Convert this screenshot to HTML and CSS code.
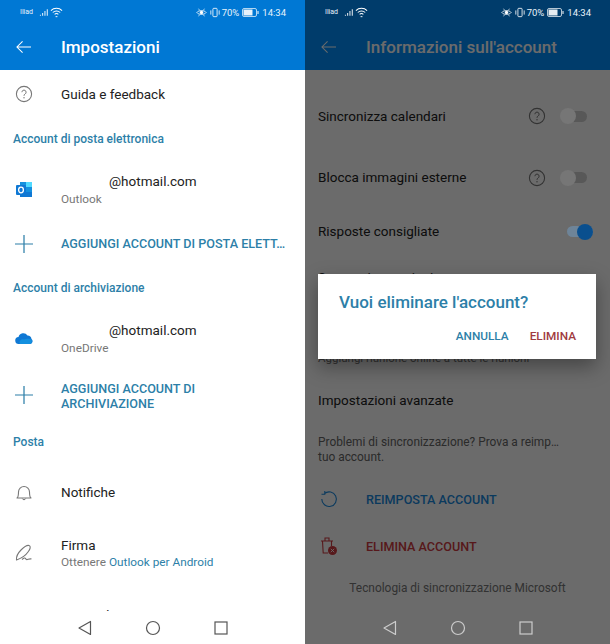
FILE: index.html
```html
<!DOCTYPE html>
<html lang="it">
<head>
<meta charset="utf-8">
<title>Impostazioni</title>
<link rel="stylesheet" href="styles.css">
</head>
<body>
<main class="screens">

  <section class="phone">
    <header class="appbar">
      <div class="status">
        <div class="status-left">
          <span class="carrier">Iliad</span>
          <svg class="ic-signal" viewBox="0 0 12 8"><path d="M1 7h1v1H1zM3.500 5h1v3h-1zM6 3h1v5H6zM8.500 1h1v7h-1z" fill="#fff"/></svg>
          <svg class="ic-wifi" viewBox="0 0 14 11"><path d="M1 3.500a8.500 8.500 0 0 1 12 0M3 5.500a5.700 5.700 0 0 1 8 0M5 7.500a2.800 2.800 0 0 1 4 0" fill="none" stroke="#fff" stroke-width="1.100"/><path d="M6 9.500h2v1H6z" fill="#fff"/></svg>
        </div>
        <div class="status-right">
          <svg class="ic-eye" viewBox="0 0 13 11"><path d="M1 5.500C3 2.500 10 2.500 12 5.500 10 8.500 3 8.500 1 5.500z" fill="none" stroke="#fff"/><circle cx="6.500" cy="5.500" r="2" fill="#fff"/><path d="M3 1l1 1.500M10 1L9 2.500M3 10l1-1.500M10 10L9 8.500" stroke="#fff" stroke-width=".8"/></svg>
          <svg class="ic-vib" viewBox="0 0 12 11"><rect x="3.500" y=".5" width="5" height="10" rx="1" fill="none" stroke="#fff"/><path d="M1 3v5M11 3v5" stroke="#fff"/></svg>
          <span>70%</span>
          <svg class="ic-batt" viewBox="0 0 17 9"><rect x=".5" y=".5" width="14" height="8" rx="1.500" fill="none" stroke="#fff" stroke-opacity=".7"/><rect x="1.500" y="1.500" width="9" height="6" fill="#fff" fill-opacity=".9"/><rect x="15.500" y="3" width="1" height="3" fill="#fff"/></svg>
          <span>14:34</span>
        </div>
      </div>
      <div class="toolbar">
        <svg class="ic-back" viewBox="0 0 16 14"><path d="M16 7H1M7 1L1 7l6 6" fill="none" stroke="#fff" stroke-width="1.100"/></svg>
        <h1 class="title">Impostazioni</h1>
      </div>
    </header>

    <div class="list">
      <div class="row row-help">
        <svg class="icon" viewBox="0 0 18 18"><circle cx="9" cy="9" r="7.600" fill="none" stroke="#777" stroke-width="1.100"/><path d="M6.900 7.200a2.100 2.100 0 1 1 3.200 1.800c-.8.500-1.100.8-1.100 1.800" fill="none" stroke="#777"/><circle cx="9" cy="12.800" r=".7" fill="#777"/></svg>
        <span class="label">Guida e feedback</span>
      </div>
      <h2 class="section">Account di posta elettronica</h2>
      <div class="row row-account">
        <svg class="icon" viewBox="0 0 18 18"><rect x="5" y="1" width="12" height="15" fill="#28a8ea"/><rect x="5" y="1" width="6" height="5" fill="#1490df"/><rect x="11" y="1" width="6" height="5" fill="#50d9ff"/><rect x="11" y="6" width="6" height="5" fill="#1490df"/><rect x="5" y="11" width="12" height="5" fill="#0f78d4"/><rect x="1" y="4" width="10" height="10" rx="1" fill="#0f78d4"/><ellipse cx="6" cy="9" rx="2.400" ry="2.800" fill="none" stroke="#fff" stroke-width="1.300"/></svg>
        <div class="text">
          <span class="email">@hotmail.com</span>
          <span class="sub">Outlook</span>
        </div>
      </div>
      <div class="row row-add">
        <svg class="icon" viewBox="0 0 16 16"><path d="M8 0v16M0 8h16" stroke="#2d7fa8" stroke-width="1.100"/></svg>
        <span class="action">AGGIUNGI ACCOUNT DI POSTA ELETT…</span>
      </div>
      <h2 class="section">Account di archiviazione</h2>
      <div class="row row-account2">
        <svg class="icon" viewBox="0 0 18 18"><path d="M4 14a3.500 3.500 0 0 1-.5-7 5 5 0 0 1 9-1.500 4 4 0 0 1 4 3.500A2.800 2.800 0 0 1 15 14z" fill="#0f78d4"/><path d="M5 14c-1.500-2.500 1-5.500 4-4.500 1.500-.5 5-1.500 7.500 0 1 1.500 0 4.500-1.500 4.500z" fill="#1490df"/></svg>
        <div class="text">
          <span class="email">@hotmail.com</span>
          <span class="sub">OneDrive</span>
        </div>
      </div>
      <div class="row row-add2">
        <svg class="icon" viewBox="0 0 16 16"><path d="M8 0v16M0 8h16" stroke="#2d7fa8" stroke-width="1.100"/></svg>
        <span class="action action-wrap">AGGIUNGI ACCOUNT DI ARCHIVIAZIONE</span>
      </div>
      <h2 class="section">Posta</h2>
      <div class="row row-notify">
        <svg class="icon" viewBox="0 0 18 18"><path d="M2 14c1.500-1 1.500-2.500 1.500-6a5.500 5.500 0 0 1 11 0c0 3.500 0 5 1.500 6z" fill="none" stroke="#777" stroke-width="1.100" stroke-linejoin="round"/><path d="M7.300 14.500a1.800 1.800 0 0 0 3.400 0" fill="none" stroke="#777"/></svg>
        <span class="label">Notifiche</span>
      </div>
      <div class="row row-sign">
        <svg class="icon" viewBox="0 0 18 18"><path d="M1.500 16C1 12 3 9 6 6c3-3 6-5 8-4.500s1.500 3.500-1 6.500c-2 3-6 6-11.500 8zM7 15.500c2-1.500 3-2 3.500-1s.5 1.500 2 1 2.500-1 4-.5" fill="none" stroke="#777" stroke-width="1.100" stroke-linejoin="round"/></svg>
        <div class="text">
          <span class="label">Firma</span>
          <span class="sub">Ottenere <span class="link">Outlook per Android</span></span>
        </div>
      </div>
      <div class="row row-cut">
        <span class="icon"></span>
        <span class="label">Azioni di scorrimento</span>
      </div>
    </div>

    <nav class="navbar">
      <svg class="nav-ic" viewBox="0 0 16 16"><path d="M13.500 1.500v13L2 8z" fill="none" stroke="#555" stroke-width="1.200" stroke-linejoin="round"/></svg>
      <svg class="nav-ic" viewBox="0 0 16 16"><circle cx="8" cy="8" r="6.500" fill="none" stroke="#555" stroke-width="1.200"/></svg>
      <svg class="nav-ic" viewBox="0 0 16 16"><rect x="2" y="2" width="12" height="12" fill="none" stroke="#555" stroke-width="1.200"/></svg>
    </nav>
  </section>

  <section class="phone phone-dim">
    <header class="appbar">
      <div class="status status-top">
        <div class="status-left">
          <span class="carrier">Iliad</span>
          <svg class="ic-signal" viewBox="0 0 12 8"><path d="M1 7h1v1H1zM3.500 5h1v3h-1zM6 3h1v5H6zM8.500 1h1v7h-1z" fill="#fff"/></svg>
          <svg class="ic-wifi" viewBox="0 0 14 11"><path d="M1 3.500a8.500 8.500 0 0 1 12 0M3 5.500a5.700 5.700 0 0 1 8 0M5 7.500a2.800 2.800 0 0 1 4 0" fill="none" stroke="#fff" stroke-width="1.100"/><path d="M6 9.500h2v1H6z" fill="#fff"/></svg>
        </div>
        <div class="status-right">
          <svg class="ic-eye" viewBox="0 0 13 11"><path d="M1 5.500C3 2.500 10 2.500 12 5.500 10 8.500 3 8.500 1 5.500z" fill="none" stroke="#fff"/><circle cx="6.500" cy="5.500" r="2" fill="#fff"/><path d="M3 1l1 1.500M10 1L9 2.500M3 10l1-1.500M10 10L9 8.500" stroke="#fff" stroke-width=".8"/></svg>
          <svg class="ic-vib" viewBox="0 0 12 11"><rect x="3.500" y=".5" width="5" height="10" rx="1" fill="none" stroke="#fff"/><path d="M1 3v5M11 3v5" stroke="#fff"/></svg>
          <span>70%</span>
          <svg class="ic-batt" viewBox="0 0 17 9"><rect x=".5" y=".5" width="14" height="8" rx="1.500" fill="none" stroke="#fff" stroke-opacity=".7"/><rect x="1.500" y="1.500" width="9" height="6" fill="#fff" fill-opacity=".9"/><rect x="15.500" y="3" width="1" height="3" fill="#fff"/></svg>
          <span>14:34</span>
        </div>
      </div>
      <div class="toolbar">
        <svg class="ic-back" viewBox="0 0 16 14"><path d="M16 7H1M7 1L1 7l6 6" fill="none" stroke="#fff" stroke-width="1.100"/></svg>
        <h1 class="title">Informazioni sull'account</h1>
      </div>
    </header>

    <div class="list list-info">
      <div class="opt opt-cal">
        <span class="label">Sincronizza calendari</span>
        <svg class="opt-help" viewBox="0 0 18 18"><circle cx="9" cy="9" r="7.600" fill="none" stroke="#777" stroke-width="1.100"/><path d="M6.900 7.200a2.100 2.100 0 1 1 3.200 1.800c-.8.500-1.100.8-1.100 1.800" fill="none" stroke="#777"/><circle cx="9" cy="12.800" r=".7" fill="#777"/></svg>
        <span class="toggle"><span class="knob"></span></span>
      </div>
      <div class="opt opt-img">
        <span class="label">Blocca immagini esterne</span>
        <svg class="opt-help" viewBox="0 0 18 18"><circle cx="9" cy="9" r="7.600" fill="none" stroke="#777" stroke-width="1.100"/><path d="M6.900 7.200a2.100 2.100 0 1 1 3.200 1.800c-.8.500-1.100.8-1.100 1.800" fill="none" stroke="#777"/><circle cx="9" cy="12.800" r=".7" fill="#777"/></svg>
        <span class="toggle"><span class="knob"></span></span>
      </div>
      <div class="opt opt-reply">
        <span class="label">Risposte consigliate</span>
        <span class="toggle toggle-on"><span class="knob"></span></span>
      </div>
      <div class="opt opt-meet">
        <span class="label">Sempre in una riunione</span>
      </div>
      <div class="opt opt-online">
        <span class="hint">Aggiungi riunione online a tutte le riunioni</span>
      </div>
      <div class="opt opt-adv">
        <span class="label">Impostazioni avanzate</span>
      </div>
      <p class="trouble">Problemi di sincronizzazione? Prova a reimp…<br>tuo account.</p>
      <div class="cmd cmd-reset">
        <svg class="icon" viewBox="0 0 18 18"><path d="M4.500 3.500A7.300 7.300 0 1 1 1.800 9M4.800 1v3.300H1.500" fill="none" stroke="#1a8ae0" stroke-width="1.100"/></svg>
        <span class="action cmd-blue">REIMPOSTA ACCOUNT</span>
      </div>
      <div class="cmd cmd-del">
        <svg class="icon icon-bin" viewBox="0 0 18 20"><path d="M1 5h12M5 5V2h4v3M2.500 5l.7 12h5" fill="none" stroke="#d03a40" stroke-width="1.100"/><path d="M11.500 5v5" stroke="#d03a40" stroke-width="1.100"/><circle cx="12.500" cy="14.500" r="4.500" fill="#d03a40"/><path d="M10.800 12.800l3.400 3.400M14.200 12.800l-3.400 3.400" stroke="#fff" stroke-width=".9"/></svg>
        <span class="action cmd-red">ELIMINA ACCOUNT</span>
      </div>
      <p class="powered">Tecnologia di sincronizzazione Microsoft</p>
    </div>

    <div class="scrim"></div>

    <nav class="navbar navbar-dim">
      <svg class="nav-ic" viewBox="0 0 16 16"><path d="M13.500 1.500v13L2 8z" fill="none" stroke="#ccc" stroke-width="1.200" stroke-linejoin="round"/></svg>
      <svg class="nav-ic" viewBox="0 0 16 16"><circle cx="8" cy="8" r="6.500" fill="none" stroke="#ccc" stroke-width="1.200"/></svg>
      <svg class="nav-ic" viewBox="0 0 16 16"><rect x="2" y="2" width="12" height="12" fill="none" stroke="#ccc" stroke-width="1.200"/></svg>
    </nav>

    <div class="dialog">
      <h2 class="dialog-title">Vuoi eliminare l'account?</h2>
      <div class="dialog-actions">
        <span class="btn btn-cancel">ANNULLA</span>
        <span class="btn btn-delete">ELIMINA</span>
      </div>
    </div>
  </section>

</main>
</body>
</html>
```

FILE: styles.css
```css
* { box-sizing: border-box; }

html, body {
  margin: 0;
  padding: 0;
  width: 610px;
  height: 644px;
  overflow: hidden;
  background: #fff;
  font-family: Roboto, "Liberation Sans", sans-serif;
}

.screens { display: flex; width: 610px; height: 644px; }

.phone {
  position: relative;
  width: 305px;
  height: 644px;
  overflow: hidden;
  display: flex;
  flex-direction: column;
  background: #fff;
}

/* header */
.appbar { height: 70px; flex: none; background: #0078d4; color: #fff; }
.phone-dim .appbar { background: #0090ff; }

.status {
  height: 24px;
  padding: 0 19px 0 20px;
  display: flex;
  justify-content: space-between;
  align-items: center;
  font-size: 9.500px;
  color: #e8f3fb;
}
.status-top { position: relative; z-index: 2; }
.status-left, .status-right { display: flex; align-items: center; }
.status-right { gap: 3px; font-size: 9.500px; }
.carrier { font-size: 7px; margin-right: 6px; }
.ic-signal { width: 11px; height: 8px; }
.ic-wifi { width: 13px; height: 11px; }
.ic-eye { width: 11px; height: 11px; }
.ic-vib { width: 10px; height: 11px; margin-right: -1px; }
.ic-batt { width: 17px; height: 9px; }

.toolbar { height: 46px; display: flex; align-items: center; padding-left: 16px; }
.ic-back { width: 15px; height: 14px; flex: none; }
.title {
  margin: 0 0 0 30px;
  font-size: 17px;
  font-weight: 500;
  white-space: nowrap;
}

/* left list */
.list { flex: 1; min-height: 0; overflow: hidden; }

.row { display: flex; align-items: center; padding-left: 15px; }
.row-help { height: 48px; }
.row-account { height: 60px; }
.row-add { height: 47px; }
.row-account2 { height: 59px; }
.row-add2 { height: 53px; }
.row-notify { height: 59px; }
.row-sign { height: 62px; }
.row-cut { height: 48px; align-items: flex-start; padding-top: 23px; }

.icon { width: 18px; height: 18px; flex: none; margin-right: 28px; }

.section {
  margin: 0;
  height: 42px;
  padding-left: 13px;
  display: flex;
  align-items: center;
  font-size: 12px;
  font-weight: 500;
  color: #2d7fa8;
}

.label { font-size: 13.500px; color: #222; line-height: 17px; white-space: nowrap; }
.text { display: flex; flex-direction: column; gap: 1px; }
.row-sign .text { gap: 0; padding-top: 1px; }
.email { padding-left: 48px; font-size: 13.500px; line-height: 17px; color: #222; }
.sub { font-size: 11.800px; line-height: 16px; color: #777; white-space: nowrap; }
.link { color: #2d7fa8; }
.action {
  font-size: 12.600px;
  font-weight: 500;
  color: #2d7fa8;
  line-height: 15px;
  white-space: nowrap;
}
.action-wrap { white-space: normal; width: 170px; padding-top: 2px; }

/* nav bar */
.navbar {
  position: absolute;
  left: 0;
  right: 0;
  bottom: 0;
  height: 33px;
  background: #fff;
  display: flex;
  align-items: center;
  justify-content: center;
  gap: 52px;
  z-index: 2;
}
.navbar-dim { background: none; }
.nav-ic { width: 16px; height: 16px; }

/* right list */
.opt { display: flex; align-items: center; padding: 0 15px 0 13px; }
.opt-cal { height: 92px; }
.opt-img { height: 61px; margin-top: -15px; }
.opt-reply { height: 47px; }
.opt-meet { height: 45px; }
.opt-online { height: 66px; align-items: flex-end; padding-bottom: 1px; }
.opt-adv { height: 46px; margin-top: 11px; }
.opt .label { flex: 1; }
.opt-help { width: 18px; height: 18px; flex: none; margin-right: 16px; }

/* the switches keep their own lit colours above the scrim */
.toggle {
  width: 25px;
  height: 11px;
  margin-right: 8px;
  border-radius: 6px;
  background: #585858;
  position: relative;
  z-index: 1;
  flex: none;
}
.knob {
  position: absolute;
  left: -2px;
  top: -2.500px;
  width: 16px;
  height: 16px;
  border-radius: 50%;
  background: #767676;
}
.toggle-on { width: 26px; margin-right: 2px; background: #6e8498; }
.toggle-on .knob { left: 10px; background: #0a4f8e; }

.hint { font-size: 11.500px; color: #777; white-space: nowrap; }

.trouble {
  margin: 12px 0 0;
  padding-left: 13px;
  font-size: 11.900px;
  line-height: 15px;
  color: #666;
  white-space: nowrap;
}

.cmd { display: flex; align-items: center; padding-left: 15px; }
.cmd-reset { height: 46px; margin-top: 11px; }
.cmd-del { height: 48px; }
.icon-bin { height: 20px; }
.cmd-blue { color: #1a8ae0; }
.cmd-red { color: #d03a40; }

.powered {
  margin: 11px 0 0;
  text-align: center;
  font-size: 11.900px;
  line-height: 15px;
  color: #777;
}

/* dialog */
.scrim {
  position: absolute;
  inset: 0;
  background: rgba(0, 0, 0, .58);
}

.dialog {
  position: absolute;
  left: 13px;
  top: 274px;
  width: 278px;
  height: 85px;
  padding: 18px 20px 0 21px;
  background: #fff;
  box-shadow: 0 8px 18px rgba(0, 0, 0, .35);
  z-index: 3;
}
.dialog-title {
  margin: 0;
  font-size: 17px;
  font-weight: 500;
  color: #2d7fa8;
  line-height: 20px;
  white-space: nowrap;
}
.dialog-actions {
  display: flex;
  justify-content: flex-end;
  gap: 21px;
  margin-top: 17px;
}
.btn { font-size: 11.800px; font-weight: 500; line-height: 14px; }
.btn-cancel { color: #2d7fa8; }
.btn-delete { color: #a03a40; }
```
